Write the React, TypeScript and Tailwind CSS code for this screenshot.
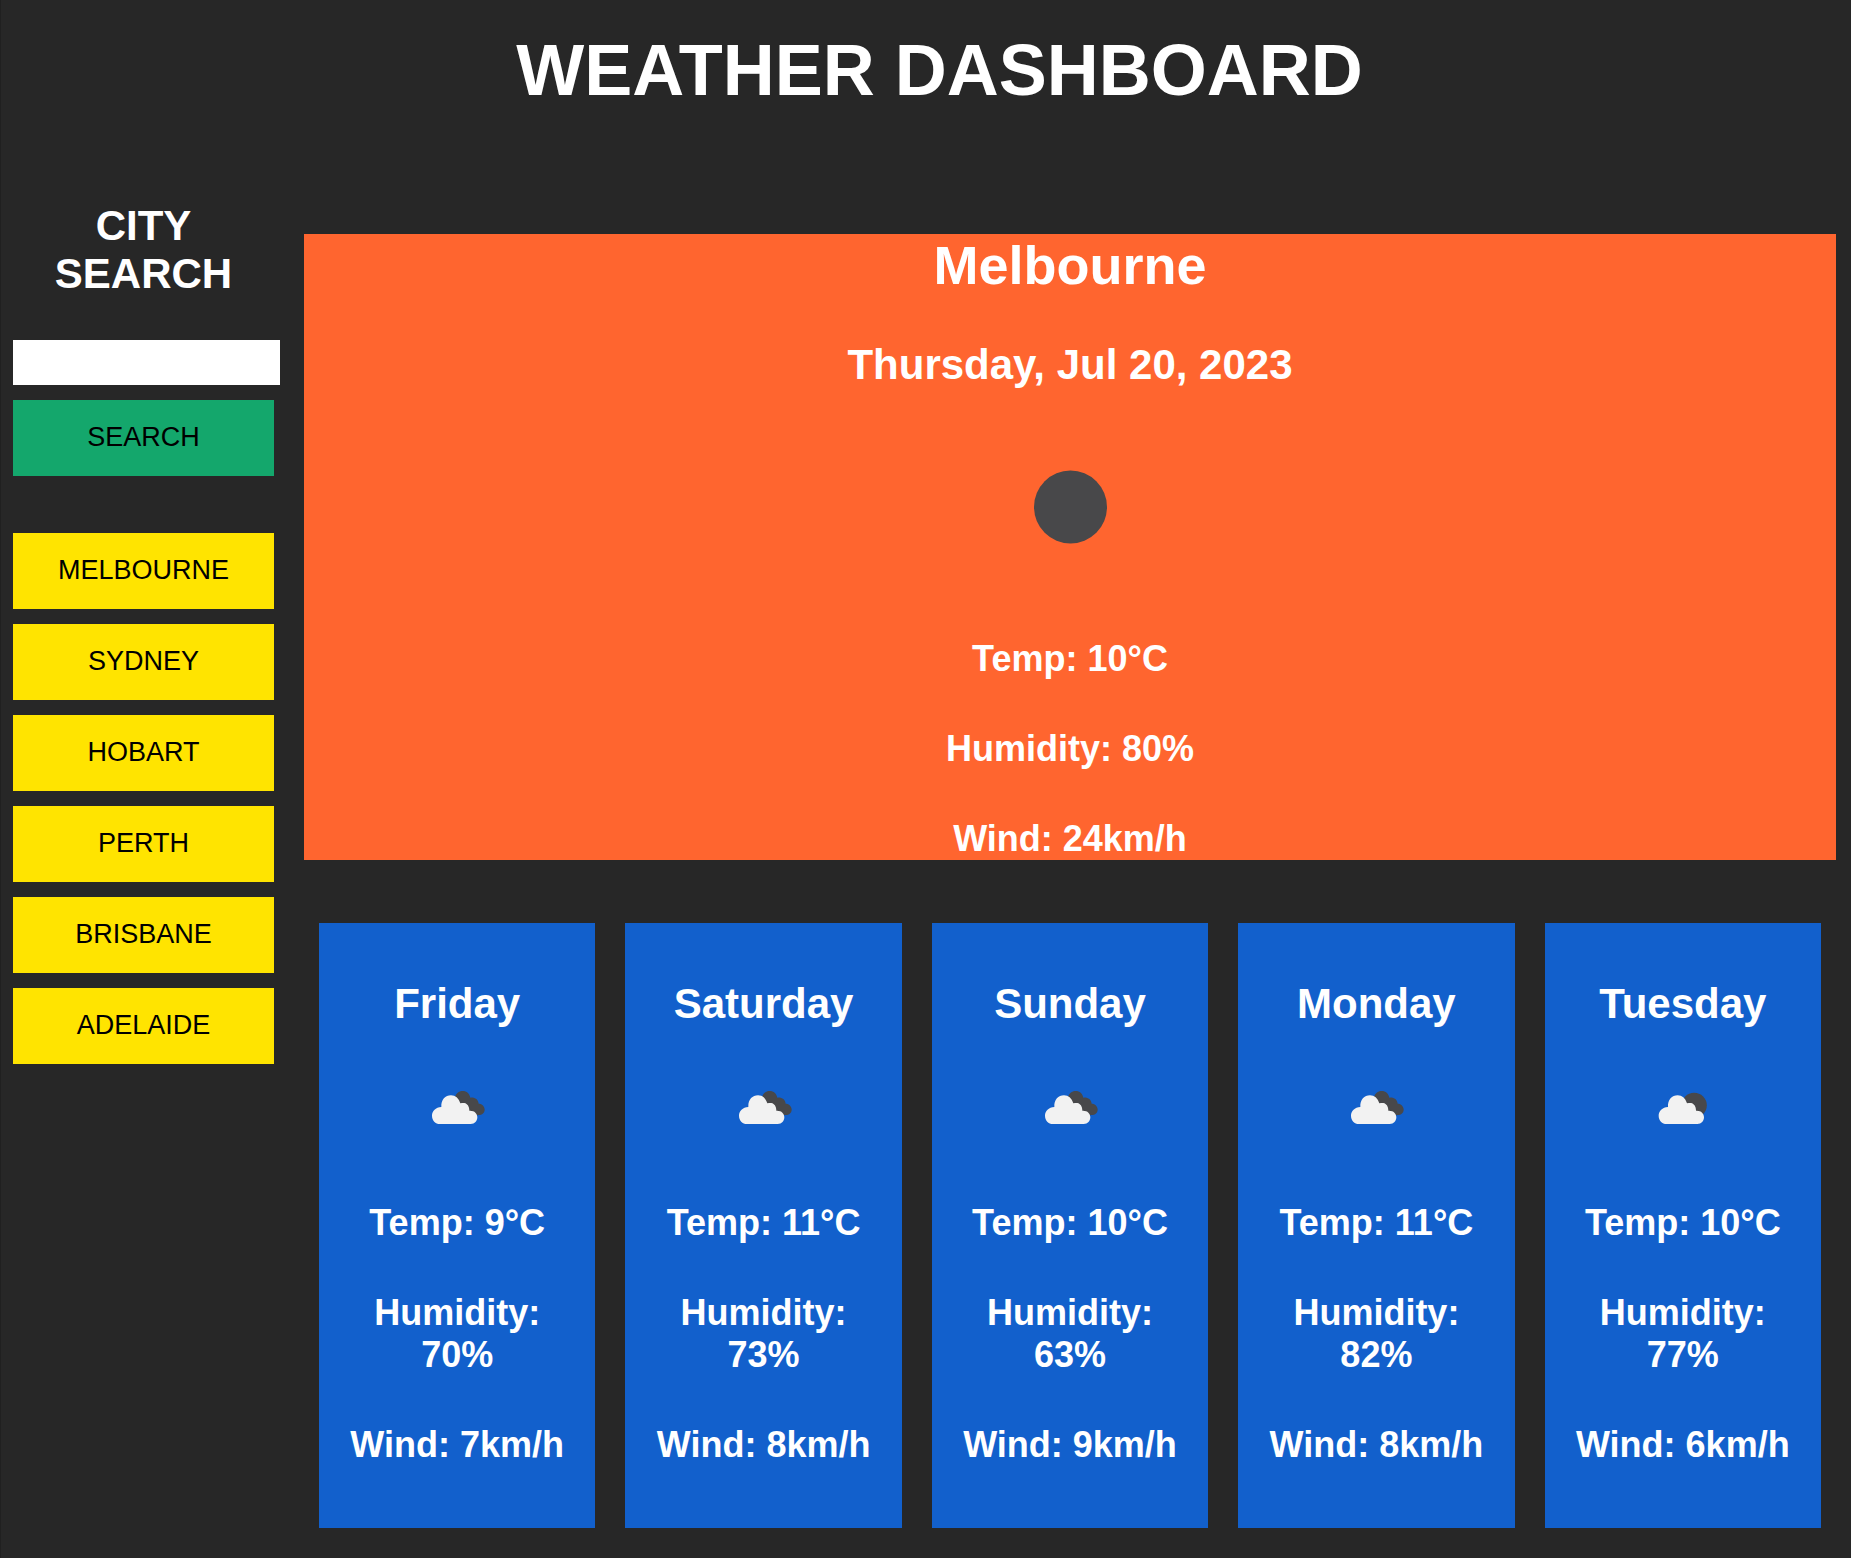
import React from "react";

const cities = ["MELBOURNE", "SYDNEY", "HOBART", "PERTH", "BRISBANE", "ADELAIDE"];

type Sky = "broken" | "partly";

const forecast: { day: string; temp: number; humidity: number; wind: number; sky: Sky }[] = [
  { day: "Friday", temp: 9, humidity: 70, wind: 7, sky: "broken" },
  { day: "Saturday", temp: 11, humidity: 73, wind: 8, sky: "broken" },
  { day: "Sunday", temp: 10, humidity: 63, wind: 9, sky: "broken" },
  { day: "Monday", temp: 11, humidity: 82, wind: 8, sky: "broken" },
  { day: "Tuesday", temp: 10, humidity: 77, wind: 6, sky: "partly" },
];

function CloudIcon({ sky }: { sky: Sky }) {
  return (
    <svg viewBox="0 0 252 180" className="mx-auto mt-[52px] block h-[60px] w-[84px]">
      {sky === "broken" ? (
        <path
          fill="#48484a"
          d="M120 50C125 38 134 33 143 33C155 33 164 41 166 53C178 51 190 58 191 71C201 71 209 79 209 89C209 98 202 105 190 105L160 112L125 90Z"
        />
      ) : (
        <circle cx="159.500" cy="76" r="38" fill="#48484a" />
      )}
      <path
        fill="#f2f2f2"
        transform={sky === "broken" ? undefined : "translate(2 0)"}
        d="M75 132C61 132 51 121 51 107C51 93 62 82 79 81C78 59 91 46 108 46C121 46 131 54 136 70C139 69 143 69 148 69C158 71 163 80 163 92C178 91 187 100 187 112C187 123 179 132 167 132Z"
      />
    </svg>
  );
}

function Stat({ children }: { children: React.ReactNode }) {
  return <p className="text-[36px] leading-[42px]">{children}</p>;
}

export default function App() {
  return (
    <div className="h-[1558px] w-[1851px] overflow-hidden border-l border-[#202020] bg-[#272727] font-['Liberation_Sans',Arial,sans-serif] font-bold text-white">
      <h1 className="h-[234px] pt-7 pl-[27px] text-center text-[72px] leading-[84px]">
        WEATHER DASHBOARD
      </h1>
      <div className="flex items-start">
        <aside className="-mt-8 ml-3 w-[291px] shrink-0">
          <h2 className="w-[261px] px-6 text-center text-[42px] leading-[48px]">CITY SEARCH</h2>
          <input
            type="text"
            aria-label="City"
            className="mt-[42px] block h-[45px] w-[267px] bg-white px-3 text-[27px] font-normal text-black outline-none"
          />
          <button className="mt-[15px] block h-[76px] w-[261px] bg-[#14a76c] pb-0.5 text-center text-[27px] leading-[30px] font-normal text-black">
            SEARCH
          </button>
          <div className="mt-[57px] flex flex-col gap-[15px]">
            {cities.map((city) => (
              <button
                key={city}
                className="block h-[76px] w-[261px] bg-[#ffe400] pb-0.5 text-center text-[27px] leading-[30px] font-normal text-black"
              >
                {city}
              </button>
            ))}
          </div>
        </aside>
        <main className="w-[1532px] shrink-0 text-center">
          <section className="h-[626px] bg-[#ff652f]">
            <h2 className="text-[54px] leading-[62px]">Melbourne</h2>
            <h3 className="mt-[45px] text-[42px] leading-[48px]">Thursday, Jul 20, 2023</h3>
            <svg viewBox="0 0 74 74" className="mx-auto mt-[81px] block size-[74px]">
              <circle cx="37.500" cy="37" r="36.500" fill="#48484a" />
            </svg>
            <div className="mt-[94px] flex flex-col gap-12">
              <Stat>Temp: 10°C</Stat>
              <Stat>Humidity: 80%</Stat>
              <Stat>Wind: 24km/h</Stat>
            </div>
          </section>
          <section className="mt-[63px] grid grid-cols-5 gap-[30px] px-[15px]">
            {forecast.map((f) => (
              <article key={f.day} className="h-[605px] bg-[#1260cc] px-[18px] pt-[57px]">
                <h3 className="text-[42px] leading-[48px]">{f.day}</h3>
                <CloudIcon sky={f.sky} />
                <div className="mt-[62px] flex flex-col gap-12">
                  <Stat>Temp: {f.temp}°C</Stat>
                  <Stat>
                    Humidity: {f.humidity}%
                  </Stat>
                  <Stat>Wind: {f.wind}km/h</Stat>
                </div>
              </article>
            ))}
          </section>
        </main>
      </div>
    </div>
  );
}
